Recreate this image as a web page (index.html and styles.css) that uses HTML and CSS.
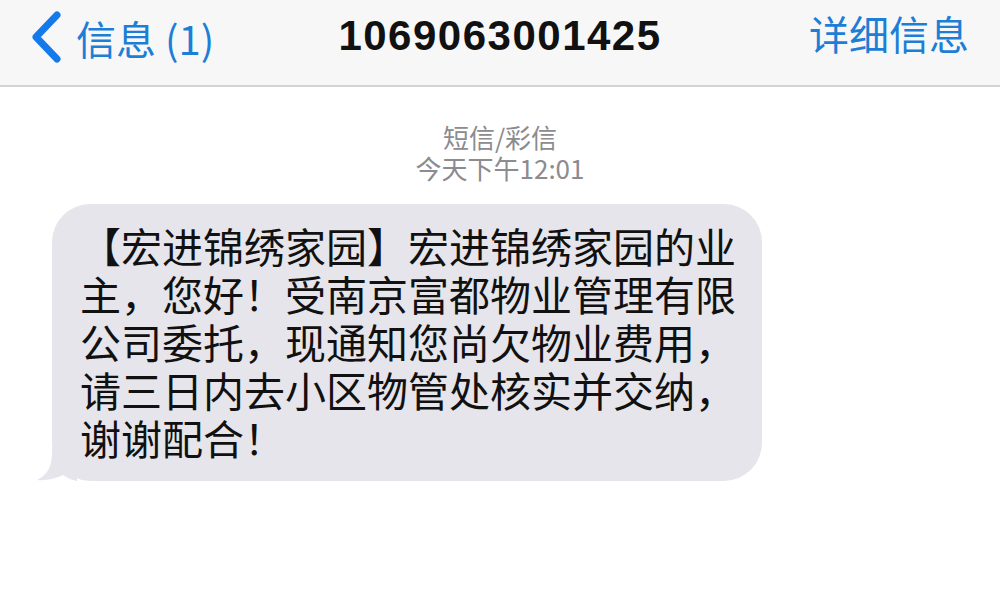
FILE: index.html
```html
<!DOCTYPE html>
<html lang="zh-CN">
  <head>
    <meta charset="UTF-8" />
    <meta name="viewport" content="width=device-width, initial-scale=1.0" />
    <title>1069063001425</title>
    <link rel="stylesheet" href="styles.css">
  </head>
  <body>
    <header class="navbar">
      <a class="nav-back" href="#">
        <svg class="chevron" viewBox="0 0 32 52" width="32" height="52">
          <path d="M27 4 L6 26 L27 48" fill="none" stroke="#1479ea" stroke-width="7" stroke-linecap="round" stroke-linejoin="round" />
        </svg>
        <span>信息 (1)</span>
      </a>
      <h1 class="nav-title">1069063001425</h1>
      <a class="nav-detail" href="#">详细信息</a>
    </header>

    <main class="thread">
      <div class="meta">
        <div>短信/彩信</div>
        <div>今天下午12:01</div>
      </div>

      <div class="bubble">
        【宏进锦绣家园】宏进锦绣家园的业主，您好！受南京富都物业管理有限公司委托，现通知您尚欠物业费用，请三日内去小区物管处核实并交纳，谢谢配合！
        <svg class="tail" viewBox="0 0 42 34" width="42" height="34">
          <path d="M17 0 L17 6 C17 20 12 28 2 33 C12 34 22 31 28 28 C32 31 36 33 42 34 L42 0 Z" fill="#e6e5eb" />
        </svg>
      </div>
    </main>
  </body>
</html>
```

FILE: styles.css
```css
body {
  margin: 0;
  background: #fff;
  font-family: "Noto Sans CJK SC", "Noto Sans", sans-serif;
}
a {
  text-decoration: none;
}

.navbar {
  display: grid;
  grid-template-columns: 1fr auto 1fr;
  align-items: start;
  height: 87px;
  padding-top: 13px;
  box-sizing: border-box;
  background: #f7f7f8;
  border-bottom: 2px solid #d3d3d6;
}
.nav-back, .nav-detail {
  font-size: 40px;
  line-height: 40px;
  color: #1d7ed6;
}
.nav-back {
  display: flex;
  align-items: center;
  gap: 14px;
  padding-left: 30px;
}
.chevron {
  display: block;
  margin-top: -2px;
}
.nav-title {
  margin: 3px 0 0;
  font-family: "Liberation Sans", Arial, sans-serif;
  font-size: 42px;
  line-height: 40px;
  font-weight: bold;
  letter-spacing: 1.5px;
  color: #111;
}
.nav-detail {
  justify-self: end;
  padding-right: 31px;
}

.thread {
  padding: 34px 0 40px;
}
.meta {
  text-align: center;
  font-size: 26px;
  line-height: 31px;
  color: #8b8b90;
}
.bubble {
  position: relative;
  width: 710px;
  box-sizing: border-box;
  margin: 21px 0 0 52px;
  padding: 17px 25px 20px 28px;
  background: #e6e5eb;
  border-radius: 38px;
  font-size: 41px;
  line-height: 48px;
  color: #111;
}
.tail {
  position: absolute;
  left: -17px;
  bottom: 0;
  display: block;
}
```
